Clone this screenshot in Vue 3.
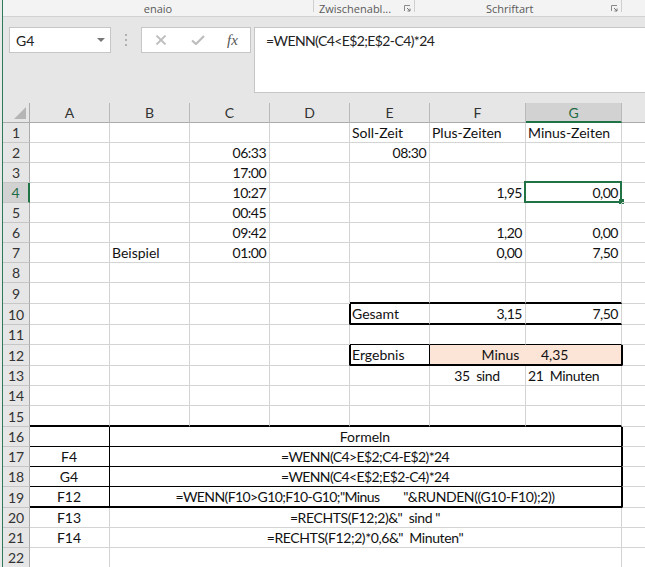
<script setup>
const colHeads = ['A', 'B', 'C', 'D', 'E', 'F', 'G', '']

function row(n, spec = {}, merged = false) {
  const cols = merged ? ['A', 'B', 'H'] : ['A', 'B', 'C', 'D', 'E', 'F', 'G', 'H']
  return {
    n,
    cells: cols.map((c) => {
      const s = spec[c] || {}
      return {
        key: c,
        span: merged && c === 'B' ? 6 : s.span || 1,
        text: s.t || '',
        tail: s.tail || '',
        cls: s.c || '',
      }
    }),
  }
}

function mergeFG(r) {
  const i = r.cells.findIndex((c) => c.key === 'F')
  r.cells.splice(i + 1, 1)
  r.cells[i].span = 2
  return r
}

const thickTop = { E: { c: 'bb2' }, F: { c: 'bb2' }, G: { c: 'bb2' } }
const nb = (n) => '\u00a0'.repeat(n)

const rows = [
  row(1, { E: { t: 'Soll-Zeit' }, F: { t: 'Plus-Zeiten' }, G: { t: 'Minus-Zeiten' } }),
  row(2, { C: { t: '06:33', c: 'r' }, E: { t: '08:30', c: 'r' } }),
  row(3, { C: { t: '17:00', c: 'r' } }),
  row(4, { C: { t: '10:27', c: 'r' }, F: { t: '1,95', c: 'r' }, G: { t: '0,00', c: 'r active' } }),
  row(5, { C: { t: '00:45', c: 'r' } }),
  row(6, { C: { t: '09:42', c: 'r' }, F: { t: '1,20', c: 'r' }, G: { t: '0,00', c: 'r' } }),
  row(7, { B: { t: 'Beispiel' }, C: { t: '01:00', c: 'r' }, F: { t: '0,00', c: 'r' }, G: { t: '7,50', c: 'r' } }),
  row(8),
  row(9, thickTop),
  row(10, {
    D: { c: 'br' },
    E: { t: 'Gesamt', c: 'bl bb2' },
    F: { t: '3,15', c: 'r bb2' },
    G: { t: '7,50', c: 'r bb2' },
  }),
  row(11, { E: { c: 'bb' }, F: { c: 'bb' }, G: { c: 'bb' } }),
  mergeFG(
    row(12, {
      D: { c: 'br' },
      E: { t: 'Ergebnis', c: 'bl br bb2' },
      F: { t: 'Minus' + nb(6) + '4,35', c: 'ctr peach br bb2' },
      H: { c: 'bl' },
    }),
  ),
  row(13, { F: { t: '35' + nb(2) + 'sind', c: 'ctr tight' }, G: { t: '21' + nb(2) + 'Minuten', c: 'tight' } }),
  row(14),
  row(15, {
    A: { c: 'bb2' }, B: { c: 'bb2' }, C: { c: 'bb2' }, D: { c: 'bb2' },
    E: { c: 'bb2' }, F: { c: 'bb2' }, G: { c: 'bb2' },
  }),
  row(16, { A: { c: 'br bb' }, B: { t: 'Formeln', c: 'ctr br bb' }, H: { c: 'bl' } }, true),
  row(17, { A: { t: 'F4', c: 'ctr br bb' }, B: { t: '=WENN(C4>E$2;C4-E$2)*24', c: 'ctr br bb fm' }, H: { c: 'bl' } }, true),
  row(18, { A: { t: 'G4', c: 'ctr br bb' }, B: { t: '=WENN(C4<E$2;E$2-C4)*24', c: 'ctr br bb fm' }, H: { c: 'bl' } }, true),
  row(19, {
    A: { t: 'F12', c: 'ctr br bb2' },
    B: { t: '=WENN(F10>G10;F10-G10;"Minus' + nb(8), tail: '"&RUNDEN((G10-F10);2))', c: 'ctr br bb2 fm' },
    H: { c: 'bl' },
  }, true),
  row(20, { A: { t: 'F13', c: 'ctr' }, B: { t: '=RECHTS(F12;2)&"' + nb(2) + 'sind "', c: 'ctr tight' } }, true),
  row(21, { A: { t: 'F14', c: 'ctr' }, B: { t: '=RECHTS(F12;2)*0,6&"' + nb(2) + 'Minuten"', c: 'ctr tight' } }, true),
  row(22, {}, true),
]
</script>

<template>
  <div class="app">
    <div class="inner">
      <div class="ribbon">
        <div class="group g-enaio"><span>enaio</span></div>
        <div class="group g-clip">
          <span>Zwischenabl...</span>
          <svg class="launcher" width="7" height="7" viewBox="0 0 7 7">
            <path d="M0.5 6V0.5H6" fill="none" stroke="#8a8a8a" />
            <path d="M3 3l3 3M6 3.5V6H3.5" fill="none" stroke="#777" />
          </svg>
        </div>
        <div class="group g-font">
          <span>Schriftart</span>
          <svg class="launcher" width="7" height="7" viewBox="0 0 7 7">
            <path d="M0.5 6V0.5H6" fill="none" stroke="#8a8a8a" />
            <path d="M3 3l3 3M6 3.5V6H3.5" fill="none" stroke="#777" />
          </svg>
        </div>
      </div>

      <div class="formula-bar">
        <div class="name-box">
          <span>G4</span>
          <i class="caret"></i>
        </div>
        <div class="grip"><i></i><i></i><i></i></div>
        <div class="controls">
          <svg width="12" height="10" viewBox="0 0 12 10" class="ic-x">
            <path d="M1.5 0.5L10.5 9.5M10.5 0.5L1.5 9.5" stroke="#bdbdbd" stroke-width="1.8" fill="none" />
          </svg>
          <svg width="14" height="10" viewBox="0 0 14 10" class="ic-check">
            <path d="M1 5.5L5 9L13 1" stroke="#bdbdbd" stroke-width="2.2" fill="none" />
          </svg>
          <span class="fx">fx</span>
        </div>
        <div class="formula">=WENN(C4&lt;E$2;E$2-C4)*24</div>
      </div>

      <div class="sheet">
        <div class="corner">
          <svg width="12" height="12" viewBox="0 0 12 12"><path d="M12 0V12H0Z" fill="#b5b5b5" /></svg>
        </div>
        <div
          v-for="c in colHeads"
          :key="'h' + c"
          class="col-head"
          :class="{ selected: c === 'G', last: c === '' }"
        >{{ c }}</div>

        <template v-for="r in rows" :key="r.n">
          <div class="row-head" :class="{ selected: r.n === 4 }">{{ r.n }}</div>
          <div
            v-for="c in r.cells"
            :key="c.key"
            class="cell"
            :class="c.cls"
            :style="c.span > 1 ? { gridColumn: 'span ' + c.span } : null"
          >
            <span class="txt">{{ c.text }}<span v-if="c.tail" class="tail">{{ c.tail }}</span></span>
            <template v-if="c.cls.includes('active')">
              <i class="sel-box"></i>
              <i class="sel-handle"></i>
            </template>
          </div>
        </template>
      </div>
    </div>
  </div>
</template>

<style scoped>
.app {
  width: 645px;
  height: 567px;
  overflow: hidden;
  box-sizing: border-box;
  border-left: 2px solid #eaeaea;
  background: #e6e6e6;
  font-family: "Lato", "Liberation Sans", sans-serif;
}
.inner {
  height: 100%;
  border-left: 1px solid #2f7a58;
  display: flex;
  flex-direction: column;
}
.ribbon {
  height: 17px;
  flex: none;
  box-sizing: border-box;
  background: #f3f3f3;
  border-bottom: 1px solid #d2d2d2;
  display: flex;
  font-family: "Open Sans", "Liberation Sans", sans-serif;
  font-size: 11px;
  color: #5a5a5a;
}
.group {
  height: 12px;
  flex: none;
  display: flex;
  align-items: center;
  box-sizing: border-box;
  position: relative;
}
.group span {
  position: relative;
  top: 2px;
}
.g-enaio {
  width: 311px;
  justify-content: center;
  border-right: 1px solid #cfcfcf;
}
.g-clip {
  width: 101px;
  padding-left: 5px;
  border-right: 1px solid #cfcfcf;
}
.g-font {
  width: 207px;
  padding-left: 71px;
  border-right: 1px solid #cfcfcf;
}
.launcher {
  position: absolute;
  top: 5px;
  right: 3px;
}
.formula-bar {
  height: 86px;
  flex: none;
  box-sizing: border-box;
  display: flex;
  align-items: flex-start;
  padding: 10px 0 0 6px;
}
.name-box {
  width: 102px;
  height: 26px;
  flex: none;
  box-sizing: border-box;
  background: #fff;
  border: 1px solid #c6c6c6;
  display: flex;
  align-items: center;
  justify-content: space-between;
  padding: 0 5px 0 6px;
  font-size: 14px;
  color: #222;
}
.caret {
  width: 0;
  height: 0;
  border-left: 4px solid transparent;
  border-right: 4px solid transparent;
  border-top: 4px solid #777;
}
.grip {
  width: 2px;
  height: 12px;
  flex: none;
  margin: 7px 14px 0 14px;
  display: flex;
  flex-direction: column;
  justify-content: space-between;
}
.grip i {
  width: 2px;
  height: 2px;
  background: #b0b0b0;
}
.controls {
  width: 110px;
  height: 26px;
  flex: none;
  box-sizing: border-box;
  background: #fff;
  border: 1px solid #c6c6c6;
  display: flex;
  align-items: center;
  padding-left: 13px;
}
.ic-check {
  margin-left: 24px;
}
.fx {
  margin-left: 22px;
  font-family: "Liberation Serif", serif;
  font-style: italic;
  font-size: 15px;
  color: #555;
}
.formula {
  margin-left: 3px;
  width: 420px;
  height: 66px;
  flex: none;
  box-sizing: border-box;
  background: #fff;
  border: 1px solid #c6c6c6;
  padding: 4px 0 0 11px;
  font-size: 14px;
  letter-spacing: -0.6px;
  color: #222;
}
.sheet {
  flex: none;
  display: grid;
  grid-template-columns: 27px repeat(5, 80px) 96px 96px 24px;
  grid-template-rows:
    20px repeat(8, 20px) 21px 21px 20px 21px 20px 20px 21px 20px 20px 20px 21px 20px 20px 20px;
  background: #fff;
  font-size: 14px;
  color: #111;
}
.corner {
  background: #e6e6e6;
  border-right: 1px solid #ababab;
  border-bottom: 1px solid #ababab;
  box-sizing: border-box;
  display: flex;
  justify-content: flex-start;
  padding: 4px 0 0 11px;
}
.col-head {
  background: #e6e6e6;
  border-right: 1px solid #b9b9b9;
  border-bottom: 1px solid #ababab;
  box-sizing: border-box;
  display: flex;
  align-items: center;
  justify-content: center;
  color: #333;
}
.col-head.selected {
  background: #d2d2d2;
  border-bottom: 2px solid #217346;
  color: #1f6b45;
}
.col-head.last {
  border-right: none;
}
.row-head {
  background: #e6e6e6;
  border-right: 1px solid #ababab;
  border-bottom: 1px solid #c6c6c6;
  box-sizing: border-box;
  display: flex;
  align-items: center;
  justify-content: center;
  color: #333;
}
.row-head.selected {
  background: #d2d2d2;
  border-right: 2px solid #217346;
  color: #1f6b45;
}
.cell {
  position: relative;
  box-sizing: border-box;
  border-right: 1px solid #d4d4d4;
  border-bottom: 1px solid #d4d4d4;
  display: flex;
  align-items: center;
  padding: 0 3px 0 2px;
  white-space: pre;
  overflow: visible;
}
.txt {
  line-height: 19px;
}
.tail {
  letter-spacing: -0.4px;
}
.r {
  justify-content: flex-end;
  letter-spacing: -0.5px;
}
.ctr {
  justify-content: center;
}
.fm {
  letter-spacing: -0.6px;
}
.tight {
  letter-spacing: -0.4px;
}
.bb {
  border-bottom: 1px solid #000;
}
.bb2 {
  border-bottom: 2px solid #000;
}
.br {
  border-right: 1px solid #000;
}
.bl {
  border-left: 1px solid #000;
  padding-left: 1px;
}
.peach {
  background: #fce4d6;
}
.sel-box {
  position: absolute;
  left: -2px;
  top: -2px;
  right: -1px;
  bottom: -1px;
  border: 2px solid #217346;
  pointer-events: none;
}
.sel-handle {
  position: absolute;
  right: -3px;
  bottom: -2px;
  width: 5px;
  height: 5px;
  background: #217346;
}
</style>
